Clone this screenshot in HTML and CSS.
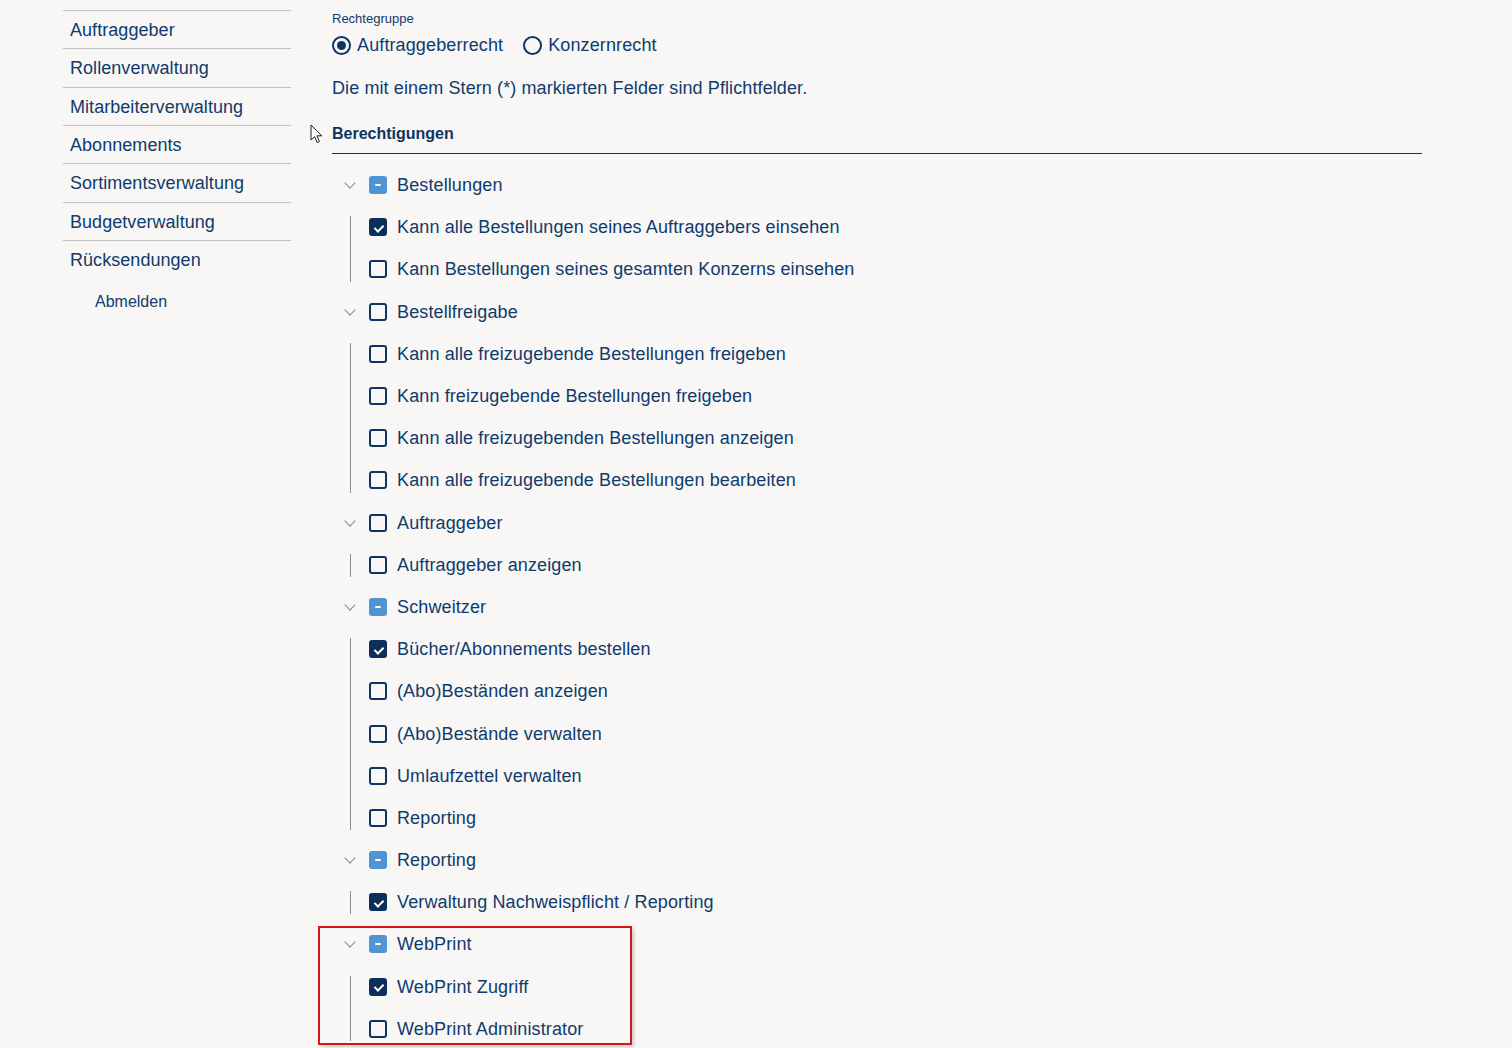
FILE: index.html
```html
<!DOCTYPE html>
<html lang="de">
<head>
<meta charset="utf-8">
<title>Rollenverwaltung</title>
<link rel="stylesheet" href="styles.css">
</head>
<body>
<div class="page">
  <nav class="sidebar">
    <ul class="menu">
      <li class="menu-item">Auftraggeber</li>
      <li class="menu-item">Rollenverwaltung</li>
      <li class="menu-item">Mitarbeiterverwaltung</li>
      <li class="menu-item">Abonnements</li>
      <li class="menu-item">Sortimentsverwaltung</li>
      <li class="menu-item">Budgetverwaltung</li>
      <li class="menu-item last">Rücksendungen</li>
    </ul>
    <div class="logout">Abmelden</div>
  </nav>

  <main class="main">
    <div class="label-small">Rechtegruppe</div>
    <div class="radios">
      <label class="radio"><span class="radio-dot checked"></span>Auftraggeberrecht</label>
      <label class="radio"><span class="radio-dot"></span>Konzernrecht</label>
    </div>
    <p class="hint">Die mit einem Stern (*) markierten Felder sind Pflichtfelder.</p>
    <div class="section-head">
      <svg class="cursor" width="14" height="20" viewBox="0 0 14 20"><path d="M1 1 L1 16 L4.6 12.6 L7.2 18.6 L9.4 17.6 L6.9 11.8 L11.8 11.8 Z" fill="#fff" stroke="#222" stroke-width="1" stroke-linejoin="round"/></svg>
      <h3 class="section-title">Berechtigungen</h3>
    </div>

    <div class="tree">
      <div class="node">
        <div class="row"><span class="switcher"></span><span class="cb indet"></span><span class="txt">Bestellungen</span></div>
        <div class="children">
          <div class="row"><span class="indent"></span><span class="cb checked"></span><span class="txt">Kann alle Bestellungen seines Auftraggebers einsehen</span></div>
          <div class="row"><span class="indent"></span><span class="cb"></span><span class="txt">Kann Bestellungen seines gesamten Konzerns einsehen</span></div>
        </div>
      </div>
      <div class="node">
        <div class="row"><span class="switcher"></span><span class="cb"></span><span class="txt">Bestellfreigabe</span></div>
        <div class="children">
          <div class="row"><span class="indent"></span><span class="cb"></span><span class="txt">Kann alle freizugebende Bestellungen freigeben</span></div>
          <div class="row"><span class="indent"></span><span class="cb"></span><span class="txt">Kann freizugebende Bestellungen freigeben</span></div>
          <div class="row"><span class="indent"></span><span class="cb"></span><span class="txt">Kann alle freizugebenden Bestellungen anzeigen</span></div>
          <div class="row"><span class="indent"></span><span class="cb"></span><span class="txt">Kann alle freizugebende Bestellungen bearbeiten</span></div>
        </div>
      </div>
      <div class="node">
        <div class="row"><span class="switcher"></span><span class="cb"></span><span class="txt">Auftraggeber</span></div>
        <div class="children">
          <div class="row"><span class="indent"></span><span class="cb"></span><span class="txt">Auftraggeber anzeigen</span></div>
        </div>
      </div>
      <div class="node">
        <div class="row"><span class="switcher"></span><span class="cb indet"></span><span class="txt">Schweitzer</span></div>
        <div class="children">
          <div class="row"><span class="indent"></span><span class="cb checked"></span><span class="txt">Bücher/Abonnements bestellen</span></div>
          <div class="row"><span class="indent"></span><span class="cb"></span><span class="txt">(Abo)Beständen anzeigen</span></div>
          <div class="row"><span class="indent"></span><span class="cb"></span><span class="txt">(Abo)Bestände verwalten</span></div>
          <div class="row"><span class="indent"></span><span class="cb"></span><span class="txt">Umlaufzettel verwalten</span></div>
          <div class="row"><span class="indent"></span><span class="cb"></span><span class="txt">Reporting</span></div>
        </div>
      </div>
      <div class="node">
        <div class="row"><span class="switcher"></span><span class="cb indet"></span><span class="txt">Reporting</span></div>
        <div class="children">
          <div class="row"><span class="indent"></span><span class="cb checked"></span><span class="txt">Verwaltung Nachweispflicht / Reporting</span></div>
        </div>
      </div>
      <div class="node highlight">
        <div class="row"><span class="switcher"></span><span class="cb indet"></span><span class="txt">WebPrint</span></div>
        <div class="children">
          <div class="row"><span class="indent"></span><span class="cb checked"></span><span class="txt">WebPrint Zugriff</span></div>
          <div class="row"><span class="indent"></span><span class="cb"></span><span class="txt">WebPrint Administrator</span></div>
        </div>
        <div class="red-box"></div>
      </div>
    </div>
  </main>
</div>
</body>
</html>
```

FILE: styles.css
```css
html, body {
  margin: 0;
  padding: 0;
  background: #f8f7f6;
  font-family: "Liberation Sans", Arial, sans-serif;
  color: #0f3b6c;
  overflow: hidden;
}

.page {
  display: flex;
  align-items: flex-start;
}

.sidebar {
  width: 228px;
  margin-left: 63px;
  padding-top: 10px;
  flex: none;
}

.menu {
  list-style: none;
  margin: 0;
  padding: 0;
}

.menu-item {
  border-top: 1px solid #c2c2c2;
  padding: 9px 7px 7px;
  font-size: 18px;
  line-height: 21.33px;
  letter-spacing: 0.05px;
}

.logout {
  font-size: 16px;
  line-height: 20px;
  padding-left: 32px;
  margin-top: 14px;
}

.main {
  width: 1090px;
  margin-left: 41px;
  padding-top: 11px;
}

.label-small {
  font-size: 13px;
  line-height: 16px;
}

.radios {
  display: flex;
  gap: 20px;
  margin-top: 6px;
  height: 24px;
  align-items: center;
}

.radio {
  display: flex;
  align-items: center;
  font-size: 18px;
  line-height: 24px;
  gap: 6px;
  letter-spacing: 0.12px;
}

.radio-dot {
  width: 19px;
  height: 19px;
  box-sizing: border-box;
  border: 2px solid #0d3463;
  border-radius: 50%;
  position: relative;
  flex: none;
}

.radio-dot.checked::after {
  content: "";
  position: absolute;
  left: 50%;
  top: 50%;
  width: 9px;
  height: 9px;
  margin: -4.5px 0 0 -4.5px;
  border-radius: 50%;
  background: #0d3463;
}

.hint {
  margin: 19px 0 0;
  font-size: 18px;
  line-height: 24px;
  letter-spacing: 0.1px;
}

.section-head {
  position: relative;
  margin-top: 24px;
  border-bottom: 1.5px solid #0a3a5c;
  padding-bottom: 9px;
}

.section-title {
  margin: 0;
  font-size: 16px;
  line-height: 20px;
  font-weight: bold;
  color: #0c3561;
}

.cursor {
  position: absolute;
  left: -22px;
  top: 0;
}

.tree {
  margin-top: 10px;
}

.node {
  position: relative;
}

.row {
  display: flex;
  align-items: center;
  height: 42.2px;
  padding-left: 6px;
}

.switcher,
.indent {
  width: 24px;
  height: 24px;
  flex: none;
  position: relative;
  margin-right: 7px;
}

.switcher::before {
  content: "";
  position: absolute;
  left: 8px;
  top: 6px;
  width: 7px;
  height: 7px;
  border-right: 1.2px solid #8a8a8a;
  border-bottom: 1.2px solid #8a8a8a;
  transform: rotate(45deg);
}

.children {
  position: relative;
}

.children::before {
  content: "";
  position: absolute;
  left: 18px;
  top: 10px;
  bottom: 9px;
  width: 1px;
  background: #8e8e8e;
}

.cb {
  width: 18px;
  height: 18px;
  box-sizing: border-box;
  border: 2px solid #0d3463;
  border-radius: 3px;
  flex: none;
  margin-right: 10px;
  position: relative;
}

.cb.checked {
  background: #0b2f5d;
  border-color: #0b2f5d;
}

.cb.checked::after {
  content: "";
  position: absolute;
  left: 4.5px;
  top: 2.5px;
  width: 4px;
  height: 7px;
  border-right: 2px solid #fff;
  border-bottom: 2px solid #fff;
  transform: rotate(45deg);
}

.cb.indet {
  background: #4f95d6;
  border-color: #4f95d6;
}

.cb.indet::after {
  content: "";
  position: absolute;
  left: 4px;
  top: 6px;
  width: 6px;
  height: 2px;
  background: #fff;
  border-radius: 1px;
}

.txt {
  font-size: 18px;
  line-height: 24px;
  white-space: nowrap;
  letter-spacing: 0.12px;
}

.red-box {
  position: absolute;
  left: -14px;
  top: 3px;
  width: 314px;
  height: 119px;
  box-sizing: border-box;
  border: 2px solid #d9151b;
  box-shadow: 2px 2px 3px rgba(0, 0, 0, 0.18);
  pointer-events: none;
}
```
